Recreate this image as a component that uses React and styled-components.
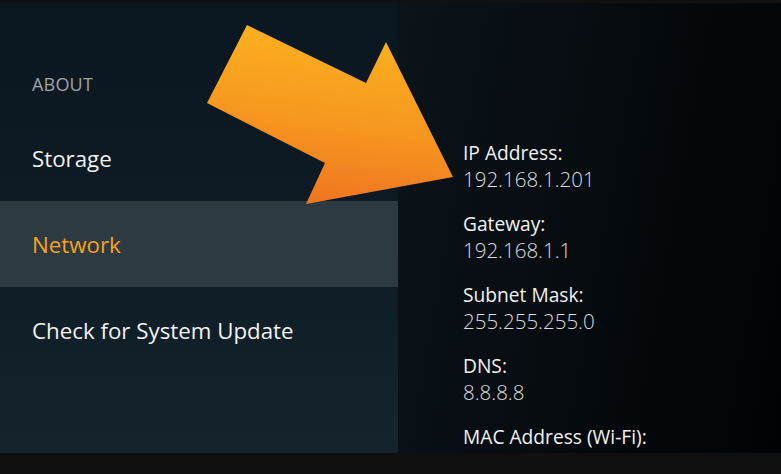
import React from "react";
import styled, { createGlobalStyle } from "styled-components";

const Global = createGlobalStyle`
  html, body { margin: 0; padding: 0; background: #0f0f0f; }
  body { font-family: "Open Sans", "Noto Sans", sans-serif; -webkit-font-smoothing: antialiased; }
  #root { width: 781px; height: 474px; overflow: hidden; }
`;

const Screen = styled.div`
  position: relative;
  width: 781px;
  height: 474px;
  display: flex;
  flex-direction: column;
  background: #0f0f0f;
`;

const TopBar = styled.div`
  height: 3px;
  background: #111111;
  flex: none;
`;

const BottomBar = styled.div`
  height: 21px;
  background: #0f0f0f;
  flex: none;
`;

const Main = styled.div`
  flex: 1;
  display: flex;
  min-height: 0;
`;

const Sidebar = styled.nav`
  width: 398px;
  flex: none;
  display: flex;
  flex-direction: column;
  background: linear-gradient(180deg, #0b1720 0%, #0e1b24 45%, #14232c 100%);
`;

const Heading = styled.div`
  padding: 69px 0 19px 32px;
  font-size: 18px;
  line-height: 24px;
  color: #9ea3a7;
  letter-spacing: 0.2px;
`;

const MenuItem = styled.div`
  height: 86px;
  display: flex;
  align-items: center;
  padding-left: 32px;
  font-size: 22.3px;
  color: ${(p) => (p.$active ? "#f7a21e" : "#f1f2f2")};
  background: ${(p) => (p.$active ? "#2e3a42" : "transparent")};
`;

const Details = styled.section`
  flex: 1;
  padding: 136px 0 0 65px;
  background: linear-gradient(100deg, #0b141a 0%, #060b0f 50%, #010203 100%);
  display: flex;
  flex-direction: column;
  gap: 17px;
  overflow: hidden;
`;

const Field = styled.div`
  display: flex;
  flex-direction: column;
`;

const Label = styled.div`
  font-size: 19.2px;
  line-height: 27px;
  color: #f1f2f2;
`;

const Value = styled.div`
  font-size: 20.5px;
  line-height: 27px;
  font-weight: 300;
  color: #dcdddd;
`;

const ArrowOverlay = styled.svg`
  position: absolute;
  left: 0;
  top: 0;
  pointer-events: none;
`;

const fields = [
  ["IP Address:", "192.168.1.201"],
  ["Gateway:", "192.168.1.1"],
  ["Subnet Mask:", "255.255.255.0"],
  ["DNS:", "8.8.8.8"],
  ["MAC Address (Wi-Fi):", ""],
];

export default function App() {
  return (
    <>
      <Global />
      <Screen>
        <TopBar />
        <Main>
          <Sidebar>
            <Heading>ABOUT</Heading>
            <MenuItem>Storage</MenuItem>
            <MenuItem $active>Network</MenuItem>
            <MenuItem>Check for System Update</MenuItem>
          </Sidebar>
          <Details>
            {fields.map(([l, v]) => (
              <Field key={l}>
                <Label>{l}</Label>
                {v && <Value>{v}</Value>}
              </Field>
            ))}
          </Details>
        </Main>
        <BottomBar />
        <ArrowOverlay width="781" height="474" viewBox="0 0 781 474">
          <defs>
            <linearGradient id="ag" x1="330" y1="25" x2="310" y2="205" gradientUnits="userSpaceOnUse">
              <stop offset="0" stopColor="#fbb21f" />
              <stop offset="0.55" stopColor="#f6961f" />
              <stop offset="1" stopColor="#ef7420" />
            </linearGradient>
          </defs>
          <polygon
            points="247,25 366,83 386,42 453,177 306,204 325,163 207,103"
            fill="url(#ag)"
          />
        </ArrowOverlay>
      </Screen>
    </>
  );
}
